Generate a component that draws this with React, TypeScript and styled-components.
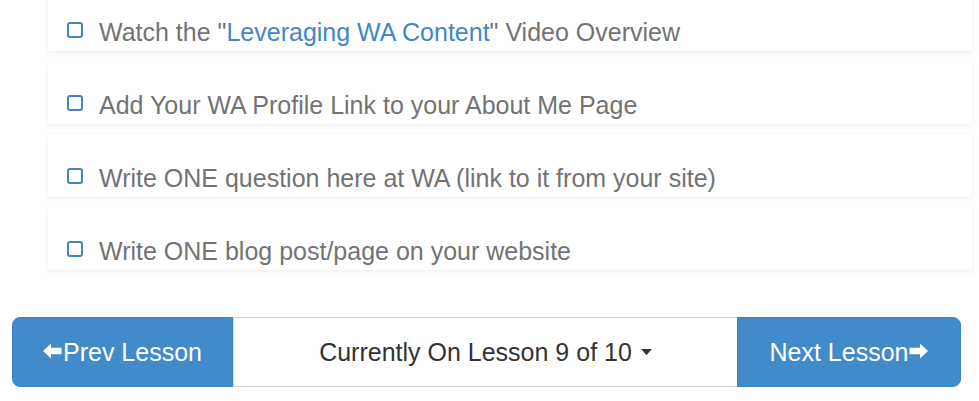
import React from "react";
import styled, { createGlobalStyle } from "styled-components";

const Global = createGlobalStyle`
  html, body { margin: 0; padding: 0; background: #fff; }
  body { font-family: "Liberation Sans", Arial, sans-serif; overflow: hidden; }
`;

const Page = styled.div`
  width: 979px;
  height: 401px;
  overflow: hidden;
  display: flex;
  flex-direction: column;
`;

const TaskList = styled.ul`
  list-style: none;
  margin: -12px 7px 0 48px;
  padding: 0;
  display: flex;
  flex-direction: column;
  gap: 10px;
`;

const TaskCard = styled.li`
  background: #fff;
  height: 63px;
  box-sizing: border-box;
  padding: 29px 19px 4px;
  box-shadow: 0 2px 6px rgba(0, 0, 0, 0.06), 0 0 2px rgba(0, 0, 0, 0.03);
  display: flex;
  align-items: center;
  gap: 16px;
`;

const Box = styled.span`
  display: block;
  width: 16px;
  height: 16px;
  min-width: 16px;
  box-sizing: border-box;
  border: 2px solid #4384c4;
  border-radius: 3px;
  flex: none;
  margin-top: -4px;
`;

const TaskText = styled.span`
  font-size: 25px;
  line-height: 30px;
  color: #737373;
  white-space: nowrap;
`;

const TaskLink = styled.a`
  color: #3f87c7;
  text-decoration: none;
`;

const Pager = styled.div`
  margin: 47px 0 0 12px;
  width: 949px;
  height: 70px;
  display: grid;
  grid-template-columns: 221px 1fr 224px;
`;

const NavButton = styled.button<{ $side: "left" | "right" }>`
  background: #428bca;
  border: 1px solid #3d84c2;
  color: #fff;
  font-family: "Liberation Sans", Arial, sans-serif;
  font-size: 25px;
  display: flex;
  align-items: center;
  justify-content: center;
  gap: 1px;
  padding: 0;
  border-radius: ${(p) => (p.$side === "left" ? "8px 0 0 8px" : "0 8px 8px 0")};
`;

const CurrentButton = styled.button`
  background: #fff;
  border: 1px solid #cccccc;
  border-left-color: #d5dde6;
  border-right: none;
  color: #333;
  font-family: "Liberation Sans", Arial, sans-serif;
  font-size: 25px;
  display: flex;
  align-items: center;
  justify-content: center;
  gap: 9px;
  padding: 0;
`;

const Arrow = ({ dir }: { dir: "left" | "right" }) => (
  <svg
    width="19"
    height="16"
    viewBox="0 0 19 16"
    style={{ transform: dir === "right" ? "scaleX(-1)" : undefined, marginTop: -3 }}
  >
    <path d="M0 8 L8 0.5 L8 4.8 L18.5 4.8 L18.5 11.2 L8 11.2 L8 15.5 Z" fill="#fff" />
  </svg>
);

const Caret = () => (
  <svg width="11" height="6" viewBox="0 0 11 6">
    <path d="M0 0 L11 0 L5.5 6 Z" fill="#333" />
  </svg>
);

export default function App() {
  return (
    <Page>
      <Global />
      <TaskList>
        <TaskCard>
          <Box />
          <TaskText>
            Watch the "<TaskLink href="#">Leveraging WA Content</TaskLink>" Video Overview
          </TaskText>
        </TaskCard>
        <TaskCard>
          <Box />
          <TaskText>Add Your WA Profile Link to your About Me Page</TaskText>
        </TaskCard>
        <TaskCard>
          <Box />
          <TaskText>Write ONE question here at WA (link to it from your site)</TaskText>
        </TaskCard>
        <TaskCard>
          <Box />
          <TaskText>Write ONE blog post/page on your website</TaskText>
        </TaskCard>
      </TaskList>
      <Pager>
        <NavButton $side="left">
          <Arrow dir="left" />
          Prev Lesson
        </NavButton>
        <CurrentButton>
          Currently On Lesson 9 of 10
          <Caret />
        </CurrentButton>
        <NavButton $side="right">
          Next Lesson
          <Arrow dir="right" />
        </NavButton>
      </Pager>
    </Page>
  );
}
